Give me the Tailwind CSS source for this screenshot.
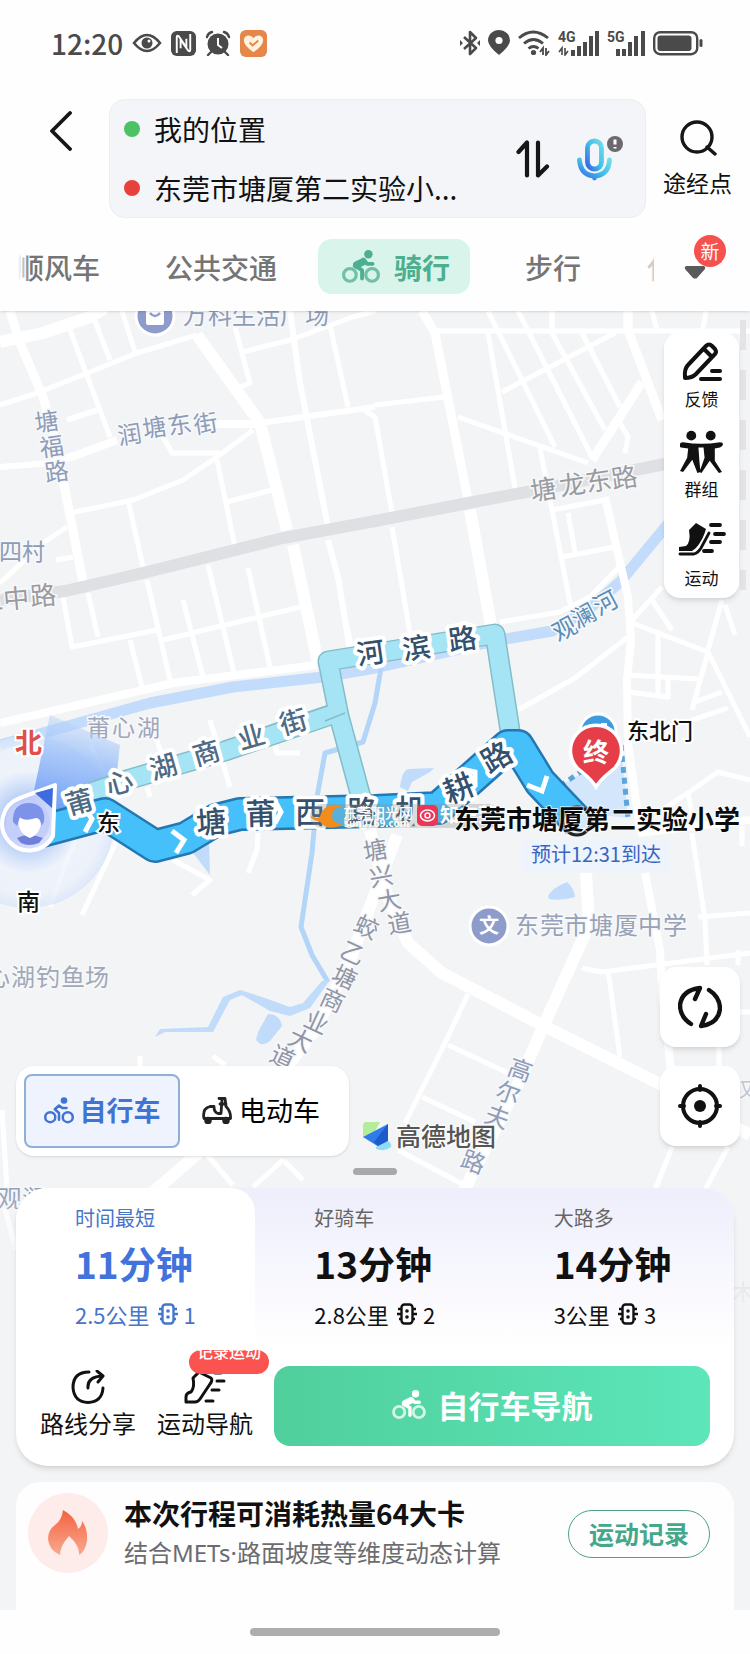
<!DOCTYPE html>
<html lang="zh-CN">
<head>
    <meta charset="UTF-8">
    <meta name="viewport" content="width=device-width, initial-scale=1.0">
    <title>骑行路线</title>
    <script src="https://cdn.jsdelivr.net/npm/@tailwindcss/browser@4"></script>
</head>
<body class="bg-[#fefefe] font-['Noto_Sans_CJK_SC',sans-serif] text-[#111]">

    <!-- shared icons -->
    <svg class="hidden">
        <symbol id="rider" viewBox="0 0 36 32">
            <g fill="none" stroke="currentColor" stroke-linecap="round" stroke-linejoin="round">
                <g stroke-width="3" opacity=".75"><circle cx="7.5" cy="23.5" r="6"/><circle cx="28.5" cy="23.5" r="6"/></g>
                <path d="M14 14l6-3" stroke-width="7"/>
                <path d="M20 9l4 4 5 0M12 15l7 4 0 8" stroke-width="3.600"/>
            </g>
            <circle cx="25" cy="4" r="4" fill="currentColor"/>
        </symbol>
        <symbol id="rider-line" viewBox="0 0 36 32">
            <g fill="none" stroke="currentColor" stroke-width="3" stroke-linecap="round" stroke-linejoin="round">
                <circle cx="7.500" cy="24" r="6"/><circle cx="28.500" cy="24" r="6"/>
                <path d="M27 13h-5l-4-3-5 4.500 5 4.500v8"/>
            </g>
            <circle cx="24" cy="4" r="4" fill="currentColor"/>
        </symbol>
        <symbol id="light" viewBox="0 0 20 22">
            <g fill="none" stroke="currentColor" stroke-width="2.400">
                <rect x="4.500" y="1.500" width="11" height="19" rx="3"/>
                <path d="M1 6h3M0 11h4M2 16h2M16 6h3M16 11h4M16 16h2"/>
            </g>
            <circle cx="10" cy="8" r="1.800" fill="currentColor"/><circle cx="10" cy="14" r="1.800" fill="currentColor"/>
        </symbol>
    </svg>

    <header class="relative z-10 bg-[#fefefe] shadow-sm">
        <!-- status bar -->
        <div class="flex h-[86px] items-center justify-between pl-[51px] pr-[47px] text-[#4a4a4a]">
            <div class="flex items-center gap-[9px]">
                <span class="text-[28px] leading-none font-medium">12:20</span>
                <svg class="h-[22px] w-[30px]" viewBox="0 0 30 22"><path d="M2 11Q15-5 28 11Q15 27 2 11z" fill="none" stroke="currentColor" stroke-width="2.600"/><circle cx="15" cy="11" r="5.500" fill="currentColor"/><circle cx="17" cy="9" r="1.500" fill="#fff"/></svg>
                <svg class="size-[25px]" viewBox="0 0 26 26"><rect width="26" height="26" rx="6" fill="currentColor"/><path d="M6 23V6.500Q6 4 8 5.500L16 17V8M20 3v16.500Q20 22 18 20.500L10 9v9" fill="none" stroke="#fff" stroke-width="2"/></svg>
                <svg class="size-[26px]" viewBox="0 0 26 26"><circle cx="13" cy="14" r="10.500" fill="currentColor"/><path d="M2 7q1-4 5-5M24 7q-1-4-5-5M6 22l-3 3M20 22l3 3" stroke="currentColor" stroke-width="2.400" fill="none" stroke-linecap="round"/><path d="M13 8v7l4 3" stroke="#fff" stroke-width="2" fill="none"/></svg>
                <svg class="size-[27px]" viewBox="0 0 28 28"><rect width="28" height="28" rx="6" fill="#e5864a"/><path d="M14 23Q4 16 4 10.500C4 5 11 4 14 8.500C17 4 24 5 24 10.500Q24 16 14 23z" fill="#fff3dd"/><path d="M10 13l3 3 6-5" fill="none" stroke="#e5864a" stroke-width="2"/></svg>
            </div>
            <div class="flex items-center gap-[8px]">
                <svg class="h-[26px] w-[20px]" viewBox="0 0 20 26"><path d="M4 7l12 11-6 6V2l6 6L4 19" fill="none" stroke="currentColor" stroke-width="2.600" stroke-linejoin="round"/><path d="M0 10l3 3-3 3zM20 10l-3 3 3 3z" fill="currentColor"/></svg>
                <svg class="h-[26px] w-[22px]" viewBox="0 0 22 26"><path d="M11 25Q0 16 0 10.500a11 10.500 0 0 1 22 0Q22 16 11 25z" fill="currentColor"/><circle cx="11" cy="10.500" r="3.600" fill="#fff"/></svg>
                <svg class="h-[26px] w-[32px]" viewBox="0 0 32 26"><g fill="none" stroke="currentColor" stroke-width="2.800"><path d="M1 8q14-12 29 0M6 13.500q9.500-8 19 0M10.500 18.500q5-4 10 0"/></g><circle cx="15.500" cy="22.500" r="2.600" fill="currentColor"/><path d="M25 25v-7l-3 4M28 18v7l3-4" fill="none" stroke="currentColor" stroke-width="1.800"/></svg>
                <svg class="h-[26px] w-[41px]" viewBox="0 0 41 26" fill="currentColor"><text x="0" y="12" font-size="14" font-weight="700" font-family="Roboto">4G</text><path d="M13 20h4v6h-4zM19 16h4v10h-4zM25 12h4v14h-4zM31 6h4v20h-4zM37 1h4v25h-4z"/><path d="M4 25v-7l-3 4M7 18v7l3-4" fill="none" stroke="currentColor" stroke-width="1.600"/></svg>
                <svg class="h-[26px] w-[38px]" viewBox="0 0 38 26" fill="currentColor"><text x="0" y="12" font-size="14" font-weight="700" font-family="Roboto">5G</text><path d="M9 19h4v7H9zM15 19h4v7h-4zM21 12h4v14h-4zM27 6h4v20h-4zM34 1h4v25h-4z"/></svg>
                <svg class="h-[26px] w-[50px]" viewBox="0 0 50 26"><rect x="1.200" y="2.200" width="43" height="22" rx="6" fill="none" stroke="currentColor" stroke-width="2.400"/><rect x="4.500" y="5.500" width="34" height="15.500" rx="3" fill="currentColor"/><rect x="46.500" y="9" width="3" height="8" rx="1.500" fill="currentColor"/></svg>
            </div>
        </div>

        <!-- route search -->
        <div class="flex pt-[13px] pl-[49px] pr-[17px]">
            <button aria-label="返回" class="mt-[12px] mr-[37px] h-[40px] w-[23px]">
                <svg class="size-full" viewBox="0 0 23 40" fill="none" stroke="#161616" stroke-width="3.800" stroke-linecap="round" stroke-linejoin="round"><path d="M21 2L3 20l18 18"/></svg>
            </button>
            <div class="flex h-[119px] flex-1 items-center rounded-[16px] border border-[#ecedf1] bg-[#f4f5f9] pl-[14px] pr-[22px]">
                <div class="flex flex-1 flex-col gap-[19px]">
                    <label class="flex items-center gap-[14px]">
                        <span class="size-[16px] rounded-full bg-[#4cc265]"></span>
                        <input aria-label="起点" value="我的位置" class="h-[40px] w-[330px] bg-transparent text-[28px] leading-[40px] outline-none">
                    </label>
                    <label class="flex items-center gap-[14px]">
                        <span class="size-[16px] rounded-full bg-[#e8403c]"></span>
                        <input aria-label="终点" value="东莞市塘厦第二实验小..." class="h-[40px] w-[330px] bg-transparent text-[28px] leading-[40px] outline-none">
                    </label>
                </div>
                <button aria-label="交换起终点" class="mr-[27px]">
                    <svg class="h-[38px] w-[34px]" viewBox="0 0 34 38" fill="none" stroke="#161616" stroke-width="4.200" stroke-linecap="round" stroke-linejoin="round"><path d="M2.500 12L11 2.500v33M22 2.500v33l9-9"/></svg>
                </button>
                <button aria-label="语音" class="h-[46px] w-[46px]">
                    <svg class="size-full" viewBox="0 0 46 46">
                        <defs><linearGradient id="mic" x1="0" y1="1" x2="1" y2="0"><stop offset="0" stop-color="#3a63e8"/><stop offset=".5" stop-color="#3fc0e6"/><stop offset="1" stop-color="#6fdcea"/></linearGradient></defs>
                        <g fill="none" stroke="url(#mic)" stroke-width="4.800" stroke-linecap="round"><rect x="10.500" y="5" width="14" height="28" rx="7"/><path d="M2.500 24q1 15 15 16q14-1 15-16M17.500 40v2"/></g>
                        <circle cx="38" cy="8" r="8" fill="#6c686d"/><path d="M38 3.500v5M38 11v1.500" stroke="#fff" stroke-width="3"/>
                    </svg>
                </button>
            </div>
            <button class="ml-[16px] flex w-[71px] flex-col items-center pt-[21px]">
                <svg class="h-[36px] w-[38px]" viewBox="0 0 38 36" fill="none" stroke="#161616" stroke-width="3.400" stroke-linecap="round"><circle cx="18" cy="17" r="15"/><path d="M28 27l8 7"/></svg>
                <span class="mt-[12px] text-[23px] leading-[28px] whitespace-nowrap">途经点</span>
            </button>
        </div>

        <!-- travel modes -->
        <div class="flex items-center justify-between pt-[21px] pb-[17px]">
            <nav class="relative flex h-[55px] w-[654px] items-center gap-[17px] overflow-hidden text-[28px] font-medium whitespace-nowrap text-[#757575]">
                <button class="-ml-[8px] px-[24px]">顺风车</button>
                <button class="px-[24px]">公共交通</button>
                <button class="flex h-[55px] w-[152px] shrink-0 items-center justify-center gap-[14px] rounded-[14px] bg-[#d9f4ea] pl-[4px] font-bold text-[#4dae90]">
                    <svg class="h-[34px] w-[38px]"><use href="#rider"/></svg>骑行
                </button>
                <button class="ml-[14px] px-[24px]">步行</button>
                <button class="pl-[25px] text-[#cfcfcf]">代驾</button>
                <div class="absolute inset-y-0 left-0 w-[30px] bg-linear-to-r from-[#fefefe] from-60% to-transparent"></div>
            </nav>
            <button aria-label="更多" class="relative mr-[44px] h-[40px] w-[22px]">
                <svg class="mt-[12px] h-[13px] w-[22px]" viewBox="0 0 22 13"><path d="M2 0h18q2 1 1 3l-8 9q-2 1-4 0L1 3Q0 1 2 0z" fill="#5a5a5a"/></svg>
                <span class="absolute -top-[12px] left-[10px] flex size-[32px] items-center justify-center rounded-full bg-[#f4514f] text-[19px] leading-none text-white">新</span>
            </button>
        </div>
    </header>

    <main class="relative overflow-hidden bg-[#f3f4f6]">
        <!-- map canvas -->
        <svg class="absolute inset-0 h-full w-full" viewBox="0 311 750 1299" preserveAspectRatio="xMidYMin slice" font-family="'Noto Sans CJK SC', sans-serif">
            <defs>
                <linearGradient id="beam" x1=".3" y1="1" x2=".5" y2="0"><stop offset="0" stop-color="#6d9bf5"/><stop offset=".6" stop-color="#9fc2f9" stop-opacity=".85"/><stop offset="1" stop-color="#b9d4fb" stop-opacity=".35"/></linearGradient>
                <radialGradient id="compass"><stop offset=".3" stop-color="#a8c6f8" stop-opacity=".8"/><stop offset=".6" stop-color="#edf3fd" stop-opacity=".7"/><stop offset=".85" stop-color="#eaf1fc" stop-opacity=".7"/><stop offset="1" stop-color="#d8e5fa" stop-opacity=".8"/></radialGradient>
                <linearGradient id="fade" x1="0" y1="0" x2="0" y2="1"><stop offset="0" stop-color="#f3f4f6" stop-opacity="0"/><stop offset="1" stop-color="#f3f4f6"/></linearGradient>
                <linearGradient id="face" x1="0" y1="0" x2="1" y2="1"><stop offset="0" stop-color="#a9b9f8"/><stop offset="1" stop-color="#e4e9fd"/></linearGradient>
            </defs>

            <!-- water -->
            <g fill="none" stroke="#c3dcfb" stroke-linejoin="round">
                <path d="M0 745L100 717 150 703 233 687 323 677 375 668 500 640 552 631 590 608 620 582 668 524 690 497" stroke-width="11"/>
                <path d="M381 668L375 703 363 742 325 753 317 797 312 853 301 927 312 955 328 982" stroke-width="5" stroke="#b3d5f8"/>
            </g>
            <g fill="#c1dcfb">
                <path d="M330 980L310 1008 290 1016 270 1011 242 995 230 1000 213 1032 165 1032 155 1037 160 1029 208 1027 223 997 240 990 262 997 290 1007 303 1003 322 981z"/>
                <path d="M268 1014Q280 1014 282 1026L270 1041Q262 1048 256 1040L258 1032Z"/>
                <path d="M400 787Q402 771 408 769L434 768 430 772 412 782 408 791z"/>
                <path d="M548 896Q552 888 567 882Q574 888 575 897Q562 901 549 899z"/>
                <path d="M193 853L209 840 210 875z"/>
            </g>

            <!-- streets -->
            <g fill="none" stroke="#fff" stroke-width="5" stroke-linejoin="round">
                <path d="M0 405L37 393 90 372 137 353 197 335M70 330L110 437M93 316L110 360M122 311L135 352M163 437L172 453 220 453M253 430L217 457 183 480 133 500 70 513M128 500L143 567M217 460L235 547M227 502L272 490M235 327L250 383 240 387M243 352L290 340 353 317 375 311M330 325L348 407M365 411L375 417 392 513M392 527L412 645M63 597L72 647 157 630M88 593L98 637M147 580L170 680M208 565L235 677M248 568L270 667M183 600L203 677M163 640L300 607M130 640L142 687M67 527L43 543 0 583M56 560L73 557M345 620L352 647"/>
                <path d="M375 405L445 397M435 331H750M488 333L515 488M488 311L555 447M518 311L592 457M552 311V333L605 430M582 333L620 407M502 392L615 333M458 417L588 463M620 423L628 437 625 453M652 311L657 330M706 311L703 330M540 448L572 613M552 510L605 500M568 513L575 552M562 557L615 547M622 564L590 597 560 612 500 622M632 620L662 587M652 600L672 630M722 600L708 650M725 605L735 635"/>
                <path d="M518 710L575 678 628 637M632 623L708 652 750 737M708 652L692 710M658 630V697M628 675L698 679M628 692L668 697V677M692 703L722 692M692 720L728 708M662 810L692 790 718 772 750 780M688 793L695 830M692 833L705 920 707 965M698 917L750 913M582 968L602 972 750 953M608 970L620 1057M468 994L445 1043 405 1123M448 1045L508 1073M422 1097L475 1122M398 1150L468 1187M672 1147L655 1190M728 1147L705 1190M719 1040V1070M738 950V965M740 1012h10M742 826v20"/>
                <path d="M77 833L50 907M117 840L82 915M173 860L210 880 192 895M258 833L257 850 248 873M210 720L230 787M273 737L277 753 300 753M147 787L150 797M2 1110L7 1190M0 1190l16 60M207 1155L233 1185M283 1160L253 1187M283 1160L303 1180M140 1056v12M213 1056l12 9M90 745L105 775M155 735l7 20"/>
                <path d="M290 311L300 383 328 527M328 540L338 577 350 650M67 420L97 410M0 467L50 463M260 423L375 407" stroke-width="6"/>
                <path d="M0 723L100 700 173 683 317 665M50 464L77 455 117 440M200 424H262M605 497L628 597 631 640 627 680 628 743 640 830M638 833L750 820M645 873L660 950 662 990 672 1080" stroke-width="8"/>
                <path d="M422 311L435 333 468 500M628 311V330L662 420M10 311L20 343 43 397 55 440 67 500 83 582M642 382L592 460" stroke-width="9"/>
                <path d="M197 335L260 423 287 530M293 545L318 663M0 342L43 333 90 317 105 308M470 510L491 625M370 830L385 890 408 943 442 973 542 1025 658 1083 750 1135M397 835L350 960 315 1030 265 1095 150 1195" stroke-width="12"/>
                <path d="M586 873L589 925 543 1027 520 1080 462 1195" stroke-width="12"/>
            </g>
            <path d="M0 600L65 591 143 573 283 538 375 521 468 503 532 491 665 464 690 459" fill="none" stroke="#dfe0e3" stroke-width="12"/>
            <path d="M743 320V590" stroke="#e6e3e6" stroke-width="6" stroke-dasharray="30 20"/>

            <!-- street and place names -->
            <g fill="#8e9cb8" stroke="#f7f8fa" stroke-width="3" paint-order="stroke" font-size="24">
                <text x="183 208 232 256 280 305" y="324">万科生活广场</text>
                <text x="36 41 46" y="432 457 482" rotate="-8">塘福路</text>
                <text x="119 144 169 195" y="445 438 435 434" rotate="-9">润塘东街</text>
                <text x="-1 22" y="560" font-size="23">四村</text>
                <g fill="#9a9b9f" font-size="26">
                    <text x="-22 4 31" y="612 609 606" rotate="-5">二中路</text>
                    <text x="532 561 587 613" y="501 496 492 489" rotate="-9">塘龙东路</text>
                </g>
                <text x="558 577 599" y="642 629 616" rotate="-28" fill="#5a8cb8">观澜河</text>
                <text x="87 112 137" y="736" fill="#a0a6ba" font-size="23">莆心湖</text>
                <text x="365 371 379 389" y="861 887 911 934" rotate="-10" fill="#9095a6" font-size="24">塘兴大道</text>
                <text x="352 338 330 318 302 286 268" y="930 956 980 1003 1025 1043 1060" rotate="25" fill="#9095a6">蛟乙塘商业大道</text>
                <text x="506 494 483 459" y="1074 1097 1121 1166" rotate="20">高尔夫路</text>
                <text x="515 540 564 589 614 638 663" y="934" fill="#98a1b5">东莞市塘厦中学</text>
                <text x="-14 11 36 61 85" y="986" fill="#a0a8b8" font-size="24">心湖钓鱼场</text>
                <text x="-2 22" y="1207">观澜</text>
                <text x="734" y="1097" fill="#c0c5d0" font-size="20">汉</text>
            </g>
            <g stroke="#fff" stroke-width="3" fill="#8d9ccb">
                <circle cx="155" cy="316" r="19"/><circle cx="489" cy="926" r="19"/>
            </g>
            <rect x="146" y="308" width="18" height="17" rx="2" fill="#fff"/><path d="M150 313q5 6 10 0" fill="none" stroke="#8d9ccb" stroke-width="2.500"/>
            <text x="479" y="933" font-size="20" font-weight="700" fill="#fff">文</text>

            <!-- school area -->
            <path d="M560 786L596 765 622 755 628 818 575 812z" fill="#d3e6fc"/>
            <path d="M560 786L582 771M621 745L628 818" fill="none" stroke="#5ba4dc" stroke-width="5" stroke-dasharray="6 5"/>

            <!-- heading and compass -->
            <circle cx="28" cy="822" r="86" fill="url(#compass)"/>
            <path d="M50 715L120 745 115 790 58 815 32 800z" fill="url(#beam)"/>

            <!-- alternative routes -->
            <g fill="none" stroke-linejoin="round">
                <path d="M70 800L130 779 225 751 330 715M365 812L339 716 328 661 495 634 513 750" stroke="#84bcc8" stroke-width="21"/>
                <path d="M70 800L130 779 225 751 334 714M365 812L339 716 328 661 495 634 513 750" stroke="#a5e4f4" stroke-width="18"/>
                <path d="M325 721l20-8" stroke="#84bcc8" stroke-width="1.500"/>
            </g>
            <!-- chosen route -->
            <g fill="none" stroke-linejoin="round">
                <path d="M38 832L105 814 155 846 186 838 216 820 240 814 375 811 438 808 508 746 518 746 540 782 578 822" stroke="#2377b3" stroke-width="34"/>
                <path d="M38 832L105 814 155 846 186 838 216 820 240 814 375 811 438 808 508 746 518 746 540 782 578 822" stroke="#45c0fa" stroke-width="29"/>
                <path d="M83 806l9 13-7 13M172 831l12 9-8 13M275 801l6 11-6 11M461 769l14 3v15M527 785l15 6 5-15" stroke="#fff" stroke-width="5" stroke-linejoin="miter"/>
            </g>

            <g fill="#34506c" stroke="#fff" stroke-width="8" stroke-linejoin="round" paint-order="stroke" font-size="28" font-weight="500">
                <text x="358 404 450" y="665 660 651" rotate="-8">河滨路</text>
                <text x="69 109 153 196 241 283" y="815 796 780 766 750 735" rotate="-16" font-size="27" fill="#4e6a84">莆心湖商业街</text>
                <text x="197 246 295 347 395 449 489" y="834 825 823 822 821 804 774" rotate="-4 -2 0 0 0 -22 -30" font-size="30">塘莆西路机耕路</text>
            </g>

            <!-- user marker -->
            <path d="M55 785L53 836A27 27 0 1 1 20 798z" fill="url(#face)" stroke="#fff" stroke-width="4" stroke-linejoin="round"/>
            <path d="M35 793L53 788 52 808z" fill="#3d6be0"/>
            <circle cx="28" cy="822" r="22" fill="#c3cffa"/>
            <path d="M17 838q11-6 26 0l-4 5q-10 4-18 0z" fill="#6f80da"/>
            <path d="M18 818q0 16 12 20q11-4 12-20z" fill="#fff"/>
            <path d="M13 822Q12 804 28 803Q46 803 44 822L41 826Q41 818 36 818Q24 822 20 817L17 826z" fill="#7d93ea"/>

            <g font-weight="500" stroke="#fff" stroke-width="4" paint-order="stroke" fill="#111">
                <text x="15" y="753" font-size="27" font-weight="700" fill="#df4f4b">北</text>
                <text x="97" y="831" font-size="23">东</text>
                <text x="17" y="910" font-size="23">南</text>
                <text x="627" y="739" font-size="22">东北门</text>
            </g>

            <!-- destination -->
            <circle cx="598" cy="732" r="18" fill="#3d9be0" stroke="#fff" stroke-width="3"/>
            <path d="M592 726h5M601 724h5v5" stroke="#fff" stroke-width="2" fill="none"/>
            <path d="M596 787Q592 780 582 772A25.500 25.500 0 1 1 610 772Q600 780 596 787z" fill="#e53e48" stroke="#fff" stroke-width="3.500"/>
            <text x="583" y="762" font-size="26" font-weight="700" fill="#fff">终</text>

            <circle cx="577" cy="821" r="14" fill="#d5e8f8" stroke="#222" stroke-width="3"/>

            <!-- site badges -->
            <rect x="310" y="804" width="190" height="24" rx="12" fill="#8a8a8a" fill-opacity=".3"/>
            <path d="M312 817q5 4 9 0q3-13 19-11q-9 1-9 10q1 9 10 8q-14 7-21-4q-4 1-8-3z" fill="#f28c1c" stroke="#f28c1c" stroke-width="2" stroke-linejoin="round"/>
            <text x="343" y="818" font-size="14" font-weight="500" fill="#fff">东莞阳光网</text>
            <text x="344" y="827" font-size="10" font-weight="700" fill="#fff">sun0769.com</text>
            <rect x="417" y="805" width="21" height="21" rx="5" fill="#ee3558"/>
            <ellipse cx="427.500" cy="815.500" rx="7" ry="5.500" fill="none" stroke="#fff" stroke-width="1.500"/>
            <circle cx="427.500" cy="815.500" r="2.500" fill="none" stroke="#fff" stroke-width="1.400"/>
            <text x="440" y="822" font-size="19" font-weight="700" fill="#fff">知东莞</text>

            <text x="454" y="829" font-size="26" font-weight="700" fill="#0c0c0c" stroke="#fff" stroke-width="2" stroke-opacity=".7" paint-order="stroke">东莞市塘厦第二实验小学</text>
            <rect x="522" y="840" width="148" height="31" rx="6" fill="#edf4fc"/>
            <text x="531" y="862" font-size="20" fill="#3a64c0">预计12:31到达</text>

            <!-- brand mark -->
            <path d="M366 1122h14l-7 13-10 3v-12q0-4 3-4z" fill="#b4ec9a"/>
            <path d="M363 1137L388 1124v17l-9 6z" fill="#2f7bea"/><path d="M388 1124l-14 18 5 5 9-6z" fill="#1d5bcb"/>
            <path d="M376 1147l12-6q4 2 3 6-6 5-15 2z" fill="#8fdcf6"/>
            <text x="396" y="1146" font-size="25" font-weight="500" fill="#555" stroke="#fafafb" stroke-width="3" paint-order="stroke">高德地图</text>

            <text x="732" y="1300" font-size="22" fill="#c8ccd6">木</text>
            <rect x="0" y="1180" width="750" height="150" fill="url(#fade)"/>
            <rect x="0" y="1330" width="750" height="280" fill="#f3f4f6"/>
        </svg>

        <div class="relative flex flex-col">
            <!-- side tools -->
            <div class="mt-[21px] mr-[11px] flex w-[75px] flex-col gap-[20px] self-end rounded-[16px] bg-white py-[9px] text-[17px] leading-[22px] shadow-md">
                <button class="flex flex-col items-center">
                    <svg class="mb-[5px] size-[42px]" viewBox="0 0 42 42" fill="none" stroke="#111" stroke-width="4" stroke-linecap="round" stroke-linejoin="round"><path d="M4 37q-1-9 3-13L25 5q3-3 6 0l3 3q2 3 0 5L15 33q-4 4-11 4zM23 8l8 8"/><path d="M31 30h8M20 38h19"/></svg>反馈
                </button>
                <button class="flex flex-col items-center">
                    <svg class="mb-[5px] size-[43px]" viewBox="0 0 42 42" fill="#111"><circle cx="11" cy="5.500" r="4.800"/><circle cx="30" cy="5.500" r="4.800"/><path d="M0 14q0-2 3-2q18 3 36 0q3 0 3 2t-3 3l-5 1 0 12 7 11-3 1-9-12-8 12-2-1 5-14-1-10h-5l1 14 1 10-3 1-5-13-9 12-3-1 7-13 1-9-7-1q-4-1-4-3z"/></svg>群组
                </button>
                <button class="flex flex-col items-center">
                    <svg class="mb-[5px] h-[42px] w-[48px]" viewBox="0 0 48 42" fill="#111"><path d="M1 27l7-1q5-4 3-16l7-7 10 6q-3 11-10 19l-4 3H1z"/><path d="M2 34h14q4-1 7-6L31 13" fill="none" stroke="#111" stroke-width="2.800" stroke-linecap="round"/><path d="M33 5h9M37 14h9M33 22h9M26 31h8" stroke="#111" stroke-width="3.800" stroke-linecap="round"/></svg>运动
                </button>
            </div>

            <button aria-label="刷新路线" class="mt-[369px] mr-[10px] flex size-[80px] items-center justify-center self-end rounded-[16px] bg-white shadow-md">
                <svg class="size-[44px]" viewBox="0 0 44 44" fill="none" stroke="#111" stroke-width="4.400" stroke-linecap="round" stroke-linejoin="round"><path d="M13 39Q2 32 2 20Q4 5 22 3l-5 11M31 5q11 7 11 19Q40 39 23 41l5-12"/></svg>
            </button>

            <div class="mt-[19px] mr-[10px] ml-[16px] flex items-start justify-between">
                <!-- vehicle switch -->
                <div class="flex h-[90px] w-[333px] gap-[12px] rounded-[18px] bg-white p-[8px] shadow-sm">
                    <button class="flex h-[74px] w-[156px] items-center justify-center gap-[6px] rounded-[8px] border-2 border-[#8fb0d4] bg-[#eef3fd] pb-[2px] text-[27px] font-bold text-[#4173d2]">
                        <svg class="h-[27px] w-[30px]"><use href="#rider-line"/></svg>自行车
                    </button>
                    <button class="flex h-[74px] items-center gap-[7px] pb-[2px] pl-[10px] text-[27px] text-black">
                        <svg class="h-[27px] w-[30px]" viewBox="0 0 30 27" fill="none" stroke="#222" stroke-width="2.800" stroke-linejoin="round" stroke-linecap="round"><path d="M17 1.500h6l1 8q5 5 4.500 12H2q-2-10 6-12h4q0 6 4 7h3l1-14M18 7h6"/><circle cx="6" cy="23.500" r="2.400" fill="#222"/><circle cx="24" cy="23.500" r="2.400" fill="#222"/></svg>电动车
                    </button>
                </div>
                <button aria-label="定位" class="flex size-[80px] items-center justify-center rounded-[16px] bg-white shadow-md">
                    <svg class="size-[44px]" viewBox="0 0 44 44" fill="none" stroke="#111" stroke-width="4" stroke-linecap="round"><circle cx="22" cy="22" r="17"/><path d="M22 2v4M22 38v4M2 22h4M38 22h4"/><circle cx="22" cy="22" r="6" fill="#111" stroke="none"/></svg>
                </button>
            </div>

            <div class="mt-[12px] h-[7px] w-[44px] self-center rounded-full bg-[#a9a9ab]"></div>

            <!-- route options -->
            <section class="mx-[16px] mt-[13px] overflow-hidden rounded-[32px] bg-white shadow-md">
                <div class="grid grid-cols-3 bg-linear-to-b from-[#eeeefc] to-white">
                    <button class="rounded-tr-[24px] bg-white pt-[16px] pb-[16px] pl-[59px] text-left text-[#4675c9]">
                        <span class="block text-[20px] leading-[28px]">时间最短</span>
                        <span class="mt-[7px] block text-[37px] leading-[48px] font-bold text-[#4272dc]">11分钟</span>
                        <span class="mt-[11px] flex items-center gap-[8px] text-[22px] leading-[32px]"><span>2.5公里</span><span class="flex items-center gap-[6px]"><svg class="h-[22px] w-[20px]"><use href="#light"/></svg>1</span></span>
                    </button>
                    <button class="pt-[16px] pb-[16px] pl-[59px] text-left text-[#111]">
                        <span class="block text-[20px] leading-[28px] text-[#666]">好骑车</span>
                        <span class="mt-[7px] block text-[37px] leading-[48px] font-bold">13分钟</span>
                        <span class="mt-[11px] flex items-center gap-[8px] text-[22px] leading-[32px]"><span>2.8公里</span><span class="flex items-center gap-[6px]"><svg class="h-[22px] w-[20px]"><use href="#light"/></svg>2</span></span>
                    </button>
                    <button class="pt-[16px] pb-[16px] pl-[59px] text-left text-[#111]">
                        <span class="block text-[20px] leading-[28px] text-[#666]">大路多</span>
                        <span class="mt-[7px] block text-[37px] leading-[48px] font-bold">14分钟</span>
                        <span class="mt-[11px] flex items-center gap-[8px] text-[22px] leading-[32px]"><span>3公里</span><span class="flex items-center gap-[6px]"><svg class="h-[22px] w-[20px]"><use href="#light"/></svg>3</span></span>
                    </button>
                </div>
                <div class="flex items-center pt-[20px] pr-[24px] pb-[20px] pl-[24px]">
                    <button class="flex w-[96px] flex-col items-center pb-[4px] text-[24px] leading-[32px]">
                        <svg class="mb-[3px] size-[34px]" viewBox="0 0 34 34" fill="none" stroke="#111" stroke-width="3" stroke-linecap="round" stroke-linejoin="round"><path d="M18 2Q2 2 2 17.500Q3 32 17 32.500Q31 32 32 18M17 18Q16 7 31 6M26 1l6 5-5 6"/></svg>路线分享
                    </button>
                    <button class="relative ml-[21px] flex w-[96px] flex-col items-center pb-[4px] text-[24px] leading-[32px]">
                        <svg class="mb-[3px] h-[34px] w-[42px]" viewBox="0 0 42 34" fill="none" stroke="#111" stroke-width="3" stroke-linecap="round" stroke-linejoin="round"><path d="M2 27q0-4 5-5q4-5 2-14l6-6 12 6q2 2-1 6L16 29q-2 3-5 3H2z"/><path d="M31 3h6M33 11h7M28 20h7M22 31h7"/></svg>运动导航
                        <span class="absolute -top-[20px] left-[32px] h-[24px] w-[80px] overflow-hidden rounded-[12px] bg-[#fb5350] text-center text-[16px] leading-[2px] font-medium text-white">记录运动</span>
                    </button>
                    <button class="ml-[21px] flex h-[80px] flex-1 items-center justify-center gap-[12px] rounded-[16px] bg-linear-to-r from-[#50cf9c] to-[#5ce6ba] pb-[2px] text-[31px] font-bold text-white">
                        <svg class="h-[30px] w-[34px]"><use href="#rider"/></svg>自行车导航
                    </button>
                </div>
            </section>

            <!-- calories -->
            <section class="mx-[16px] mt-[16px] flex h-[128px] items-start rounded-t-[24px] bg-[#fefefe] pt-[11px] pr-[24px] pl-[12px]">
                <div class="flex size-[80px] items-center justify-center rounded-full bg-[#fdece9]">
                    <svg class="h-[48px] w-[42px]" viewBox="0 0 42 48"><defs><linearGradient id="fire" x1="0" y1="0" x2="0" y2="1"><stop offset="0" stop-color="#f4623f"/><stop offset="1" stop-color="#f9a98f"/></linearGradient></defs><path d="M16 1q13 7 15 19q4-2 4-8q6 8 5 20q-2 11-8 14q1-9-10-19q-9 10-9 19Q2 41 1 30Q1 21 8 16q7-5 8-15z" fill="url(#fire)"/></svg>
                </div>
                <div class="ml-[16px] flex-1 whitespace-nowrap">
                    <h2 class="text-[28px] leading-[40px] font-bold">本次行程可消耗热量64大卡</h2>
                    <p class="mt-[2px] font-['Noto_Sans','Noto_Sans_CJK_SC',sans-serif] text-[24px] leading-[36px] text-[#6c6c6e]">结合METs·路面坡度等维度动态计算</p>
                </div>
                <button class="mt-[17px] h-[48px] w-[142px] rounded-full border border-[#4fa08a] pb-[2px] text-[25px] leading-none font-bold text-[#45a78a]">运动记录</button>
            </section>
        </div>
    </main>

    <footer class="flex justify-center pt-[18px] pb-[18px]">
        <div class="h-[8px] w-[250px] rounded-full bg-[#adadad]"></div>
    </footer>
</body>
</html>
